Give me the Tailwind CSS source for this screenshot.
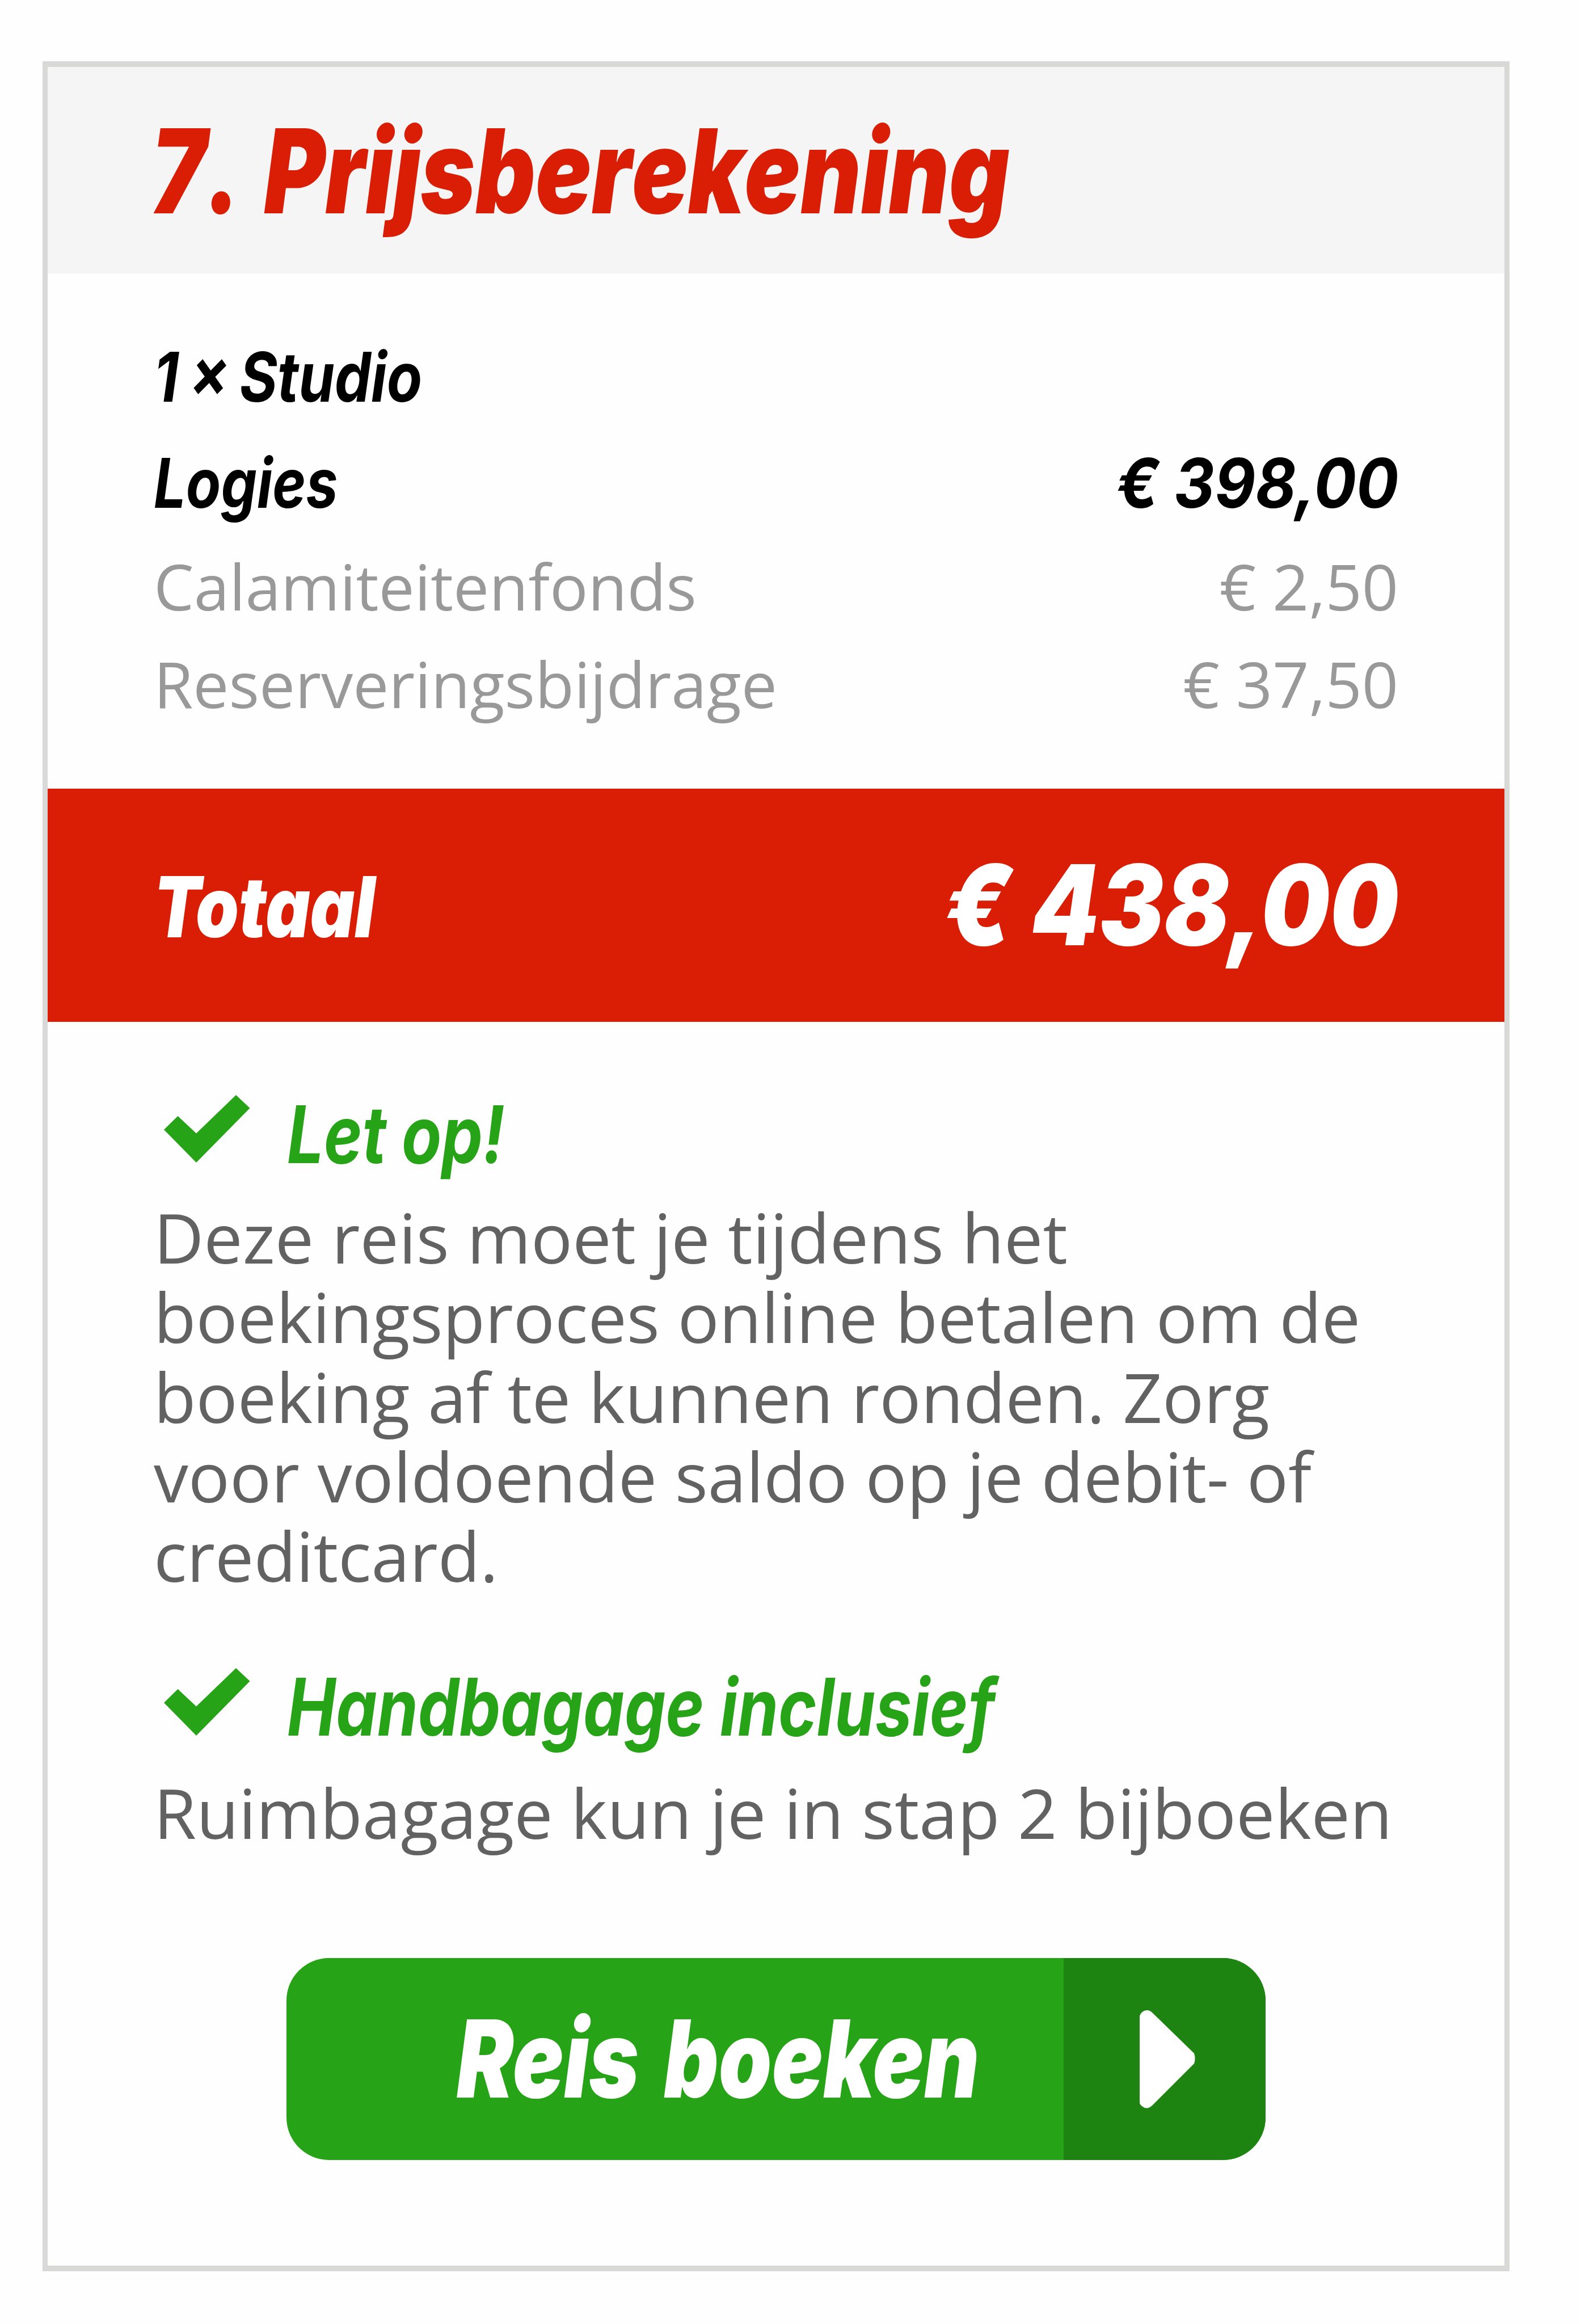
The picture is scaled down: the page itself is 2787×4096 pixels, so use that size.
<!DOCTYPE html>
<html lang="nl">
<head>
    <meta charset="UTF-8">
    <meta name="viewport" content="width=device-width, initial-scale=1.0">
    <title>Prijsberekening</title>
    <script src="https://cdn.jsdelivr.net/npm/@tailwindcss/browser@4"></script>
</head>

<body class="bg-[#fefefe]">
    <div class="w-[2787px] h-[4096px] pt-[108px] pl-[75px] overflow-hidden font-['Open_Sans',sans-serif]">
        <div class="w-[2586px] h-[3895px] border-x-[9px] border-y-[10px] border-[#d8d8d6]">

            <!-- title -->
            <div class="flex items-center h-[364px] pl-[182px] pt-[2px] bg-[#f5f5f5]">
                <h1 class="origin-left scale-x-[0.797] whitespace-nowrap [font-kerning:none] [word-spacing:10px] font-['Inter',sans-serif] italic font-black text-[206px] leading-none text-[#d91e05]">7. Prijsberekening</h1>
            </div>

            <!-- price rows -->
            <div class="h-[908px] pt-[89px] pl-[187px] pr-[187px]">
                <div class="flex items-center h-[187px] font-['Inter',sans-serif] italic font-bold text-[121px] leading-none text-black">
                    <span class="origin-left scale-x-[0.842] whitespace-nowrap [word-spacing:-6px]">1 × Studio</span>
                </div>
                <div class="flex items-center justify-between h-[187px] font-['Inter',sans-serif] italic font-bold text-[121px] leading-none text-black">
                    <span class="origin-left scale-x-[0.83] whitespace-nowrap">Logies</span>
                    <span class="origin-right scale-x-[0.914] whitespace-nowrap">€ 398,00</span>
                </div>
                <div class="flex items-center justify-between h-[172px] mt-0.5 text-[112.4px] leading-none text-[#999999]">
                    <span>Calamiteitenfonds</span>
                    <span>€ 2,50</span>
                </div>
                <div class="flex items-center justify-between h-[172px] text-[112.4px] leading-none text-[#999999]">
                    <span>Reserveringsbijdrage</span>
                    <span>€ 37,50</span>
                </div>
            </div>

            <!-- total -->
            <div class="flex items-center justify-between h-[411px] pl-[187px] pr-[187px] bg-[#d91e05] text-white font-['Inter',sans-serif] italic font-black leading-none">
                <span class="pt-[5px] origin-left scale-x-[0.818] whitespace-nowrap text-[148.5px]">Totaal</span>
                <span class="origin-right scale-x-[0.868] whitespace-nowrap text-[196.5px]">€ 438,00</span>
            </div>

            <!-- notes -->
            <div class="pt-[103px] pl-[187px] text-[121.75px] leading-[140.35px] text-[#626262]">
                <div class="flex items-center h-[186px] pl-[18px] text-[#26a316]">
                    <svg class="w-[152px] h-[119px] mb-[15px]" viewBox="0 0 152 119" fill="currentColor">
                        <path d="M127 0L151.5 23L57 119L0 61L24.5 37L57 67.5Z"/>
                    </svg>
                    <h2 class="ml-[65px] pt-[3px] origin-left scale-x-[0.82] whitespace-nowrap font-['Inter',sans-serif] italic font-bold text-[140px] leading-none">Let op!</h2>
                </div>
                <p class="mt-[20px] whitespace-nowrap">Deze reis moet je tijdens het<br>boekingsproces online betalen om de<br>boeking af te kunnen ronden. Zorg<br>voor voldoende saldo op je debit- of<br>creditcard.</p>

                <div class="flex items-center h-[186px] mt-[102px] pl-[18px] text-[#26a316]">
                    <svg class="w-[152px] h-[119px] mb-[15px]" viewBox="0 0 152 119" fill="currentColor">
                        <path d="M127 0L151.5 23L57 119L0 61L24.5 37L57 67.5Z"/>
                    </svg>
                    <h2 class="ml-[65px] pt-[3px] origin-left scale-x-[0.824] whitespace-nowrap font-['Inter',sans-serif] italic font-bold text-[140px] leading-none">Handbagage inclusief</h2>
                </div>
                <p class="mt-[24px] whitespace-nowrap">Ruimbagage kun je in stap 2 bijboeken</p>
            </div>

            <!-- button -->
            <button class="flex w-[1726px] h-[356px] mt-[187px] ml-[421px] rounded-[75px] overflow-hidden bg-[#26a316] text-white">
                <span class="flex items-center w-[1370px] h-full pl-[300px] pb-[2px]">
                    <span class="origin-left scale-x-[0.79] whitespace-nowrap [word-spacing:17px] font-['Inter',sans-serif] italic font-black text-[190px] leading-none">Reis boeken</span>
                </span>
                <span class="flex items-center w-[356px] h-full pl-[134px] bg-[#1e8411]">
                    <svg class="w-[98px] h-[173px]" viewBox="0 0 98 173" fill="currentColor">
                        <path d="M0 10Q4 0 13 0Q18 0 22 4L96 76Q99 85 96 94L23 167Q13 177 4 169Q0 166 0 163Z"/>
                    </svg>
                </span>
            </button>
        </div>
    </div>
</body>
</html>
